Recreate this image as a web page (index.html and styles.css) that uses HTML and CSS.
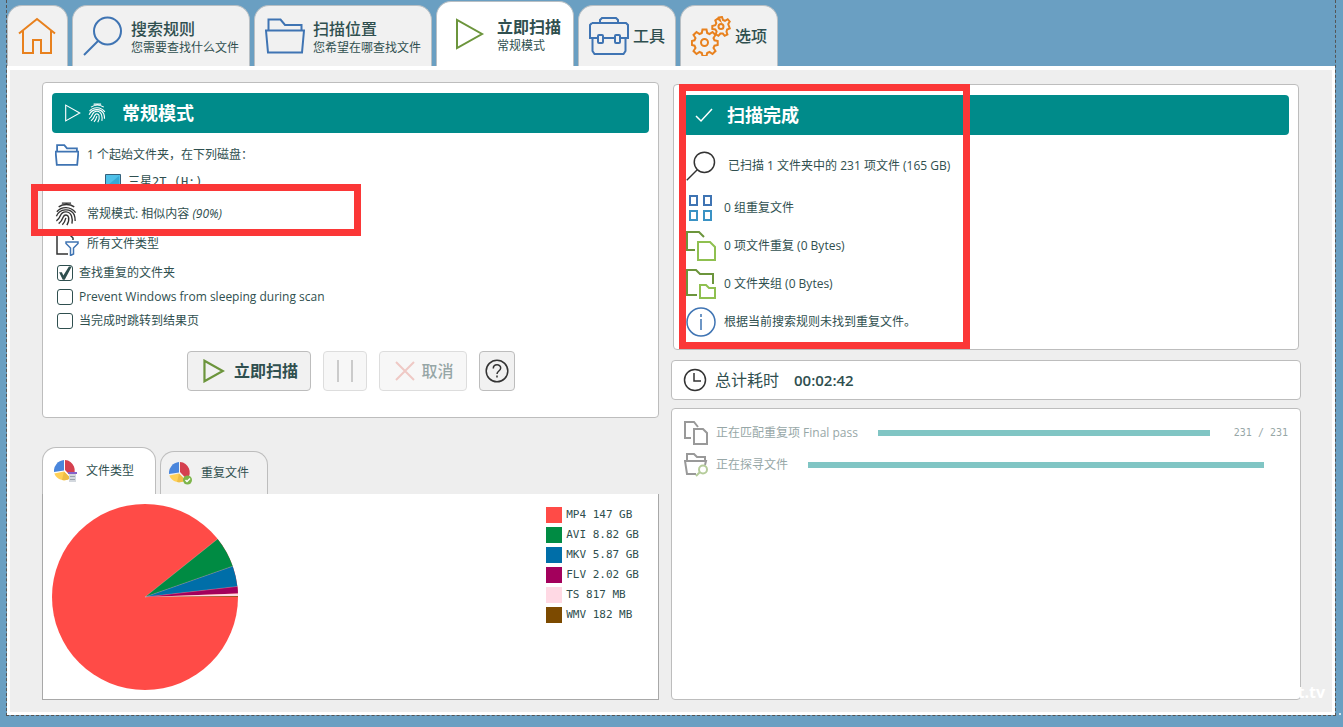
FILE: index.html
```html
<!DOCTYPE html>
<html lang="zh-CN">
<head>
<meta charset="utf-8">
<title>立即扫描</title>
<link rel="stylesheet" href="styles.css">
</head>
<body>
<svg class="defs" aria-hidden="true">
  <symbol id="i-folder" viewBox="0 0 40 36"><path d="M3.500 12.500V1.500h12l4.500 5.500h16.500v5.500M1 12.500h38l-2 22H3z"/></symbol>
  <symbol id="i-play" viewBox="0 0 30 32"><path d="M2 2v28l25-14z"/></symbol>
  <symbol id="i-lens" viewBox="0 0 40 40"><circle cx="24.500" cy="15" r="13.500"/><path d="M15 25 1 39"/></symbol>
  <symbol id="i-print" viewBox="0 0 24 26"><path d="M7.500 1.200h10M4 5.200c5-3.400 12-3.400 17 0M2 10.500C7 4.500 17 4.200 22.500 11.500M1.500 15.500C5 7 17 6 21 14c1 2.400 1 4.500 1 6.500M1.500 20.500c2.500-1.500 3.500-3.500 4.300-5.500 2.500-6.300 10.400-5.400 12.300.5 1 3 .8 5.500.4 8M4 23.500c3-2 4-4.500 5-7.200 1.300-3.300 5-2.600 5.800.2.800 3.200-.3 6-1.800 8.700M8 24.800c2.200-2.300 3.200-4.800 3.900-7.600"/></symbol>
  <symbol id="i-pie" viewBox="0 0 24 24"><path fill="#4a86dc" d="M10 11.500 0 13A11 11 0 0 1 10 1z"/><path fill="#d5404f" d="M11 1a10.500 10.500 0 0 1 7 17.500L11 11z"/><path fill="#ffd056" d="M10 12.500 16.500 19A10.500 10.500 0 0 1 .3 14.500z"/><path fill="#eebd46" d="m10 12.500 6.500 6.500a10 10 0 0 1-8.500 2z"/></symbol>
</svg>
<div class="frame">
  <nav class="tabs" role="tablist" aria-label="主导航">
    <button class="tab tab-home" role="tab" aria-label="主页">
      <svg class="orange" width="38" height="38" viewBox="0 0 38 38"><path d="M1 16.500 19 2l18 14.500M5 14v22h10V23h8v13h10V14"/></svg>
    </button>
    <button class="tab tab-wide" role="tab">
      <svg class="blue" width="40" height="40"><use href="#i-lens"/></svg>
      <span class="tab-text"><span class="tab-title">搜索规则</span><span class="tab-sub">您需要查找什么文件</span></span>
    </button>
    <button class="tab tab-wide" role="tab">
      <svg class="blue" width="40" height="36"><use href="#i-folder"/></svg>
      <span class="tab-text"><span class="tab-title">扫描位置</span><span class="tab-sub">您希望在哪查找文件</span></span>
    </button>
    <button class="tab tab-active" role="tab" aria-selected="true">
      <svg class="green" width="30" height="32"><use href="#i-play"/></svg>
      <span class="tab-text"><span class="tab-title strong">立即扫描</span><span class="tab-sub">常规模式</span></span>
    </button>
    <button class="tab tab-small" role="tab">
      <svg class="blue" width="40" height="38" viewBox="0 0 40 38"><path d="M11 6V3l2-2h14l2 2v3M3 6h34l2 2v13H31M9 21H1V8l2-2M15 21h10M3.500 21v13l2 3h29l2-3V21"/><rect x="9" y="18" width="5" height="8" rx="1"/><rect x="26" y="18" width="5" height="8" rx="1"/></svg>
      <span class="tab-title">工具</span>
    </button>
    <button class="tab tab-small" role="tab">
      <svg class="orange" width="40" height="40" viewBox="0 0 40 40"><circle cx="13.500" cy="26.500" r="3.500"/><path d="M11.500 13.500h4l.7 3.500 2.300 1 3-2 3 3-2 3 1 2.300 3.200.7v4l-3.200.7-1 2.300 2 3-3 3-3-2-2.300 1-.7 3h-4l-.7-3-2.300-1-3 2-3-3 2-3-1-2.300-2.600-.7v-4l2.600-.7 1-2.300-2-3 3-3 3 2 2.300-1z"/><circle cx="30" cy="10.500" r="2.500"/><path d="m28 1.500 3-.5 1 3 2 .8 2.700-1.600 2 2.300-1.500 2.500.7 2 .9 2.500-2.700 1-.6 2.300.9 2.700-2.700 1.300-1.900-2.300h-2.400l-2 2.300-2.600-1.500.8-2.800-1.300-2-3-.5v-3l3-.8 1-2-1-2.800 2.500-1.800 2.200 1.800z"/></svg>
      <span class="tab-title">选项</span>
    </button>
  </nav>

  <main class="panel">
    <div class="col">
      <section class="card setup">
        <h2 class="banner">
          <svg class="line" width="18" height="18"><use href="#i-play"/></svg>
          <svg class="line thin" width="18" height="20"><use href="#i-print"/></svg>
          <span class="banner-left">常规模式</span>
        </h2>
        <div class="row row-folder"><svg class="blue bold" width="24" height="22"><use href="#i-folder"/></svg><span>1 个起始文件夹，在下列磁盘：</span></div>
        <div class="row row-disk"><svg width="16" height="16" viewBox="0 0 16 16"><path fill="#4fc0e8" stroke="#35607a" d="M.5 .5h15v11H.5z"/><path fill="#36a9d6" d="M14 2v9H3z"/><path fill="#35607a" d="M4 14h8v1H4z"/></svg><span class="mono">三星2T (H:)</span></div>
        <div class="row row-mode"><svg class="dark thin" width="22" height="26"><use href="#i-print"/></svg><span>常规模式: 相似内容 <i>(90%)</i></span></div>
        <div class="row row-types"><svg width="24" height="24" viewBox="0 0 24 24"><path class="dark thin" d="M13 22H2V1h11l5 5v2"/><path class="blue thin" d="M11 10h12v1.500L18.500 16v6l-3 1.500V16L11 11.500z"/></svg><span>所有文件类型</span></div>
        <label class="check"><input type="checkbox" checked><span>查找重复的文件夹</span></label>
        <label class="check"><input type="checkbox"><span>Prevent Windows from sleeping during scan</span></label>
        <label class="check"><input type="checkbox"><span>当完成时跳转到结果页</span></label>
        <div class="actions">
          <button class="btn btn-scan"><svg class="green bold" width="22" height="24"><use href="#i-play"/></svg><span class="strong">立即扫描</span></button>
          <button class="btn btn-pause" disabled aria-label="暂停"><svg class="gray" width="18" height="24" viewBox="0 0 18 24"><path d="M2 1v22M16 1v22"/></svg></button>
          <button class="btn btn-cancel" disabled><svg class="rose" width="20" height="20" viewBox="0 0 20 20"><path d="m1 1 18 18M19 1 1 19"/></svg><span>取消</span></button>
          <button class="btn btn-help" aria-label="帮助"><svg class="dark thin" width="24" height="24" viewBox="0 0 24 24"><circle cx="12" cy="12" r="10.800"/><path d="M8.300 9.500c0-5 7.400-4.700 7.400-.5 0 3-3.700 3-3.700 6M12 16.500v2"/></svg></button>
        </div>
        <div class="mark mark-mode"></div>
      </section>

      <section class="chart">
        <div class="chart-tabs" role="tablist" aria-label="图表">
          <button class="ctab ctab-active" role="tab" aria-selected="true"><svg width="24" height="24" viewBox="0 0 24 24"><use href="#i-pie" width="24" height="24"/><path fill="#d3d8de" d="M15 14h7v9h-7z"/><path fill="#8562c8" d="M14 13h9v2h-9z"/><path stroke="#9aa3ad" d="M16 17.500h5M16 20.500h5"/></svg>文件类型</button>
          <button class="ctab" role="tab"><svg width="24" height="24" viewBox="0 0 24 24"><use href="#i-pie" width="24" height="24"/><circle cx="18.500" cy="19" r="4.500" fill="#7db54a"/><path d="m16.500 19 1.500 1.500 3-3" fill="none" stroke="#fff" stroke-width="1.500"/></svg>重复文件</button>
        </div>
        <div class="chart-body">
          <svg class="pie" width="186" height="186" viewBox="0 0 186 186" role="img" aria-label="文件类型">
            <circle cx="93" cy="93" r="93" fill="#ff4b47"/>
            <path fill="#008b43" d="M93 93 165.630 34.920A93 93 0 0 1 180.740 62.160z"/>
            <path fill="#006ea8" d="M93 93 180.740 62.160A93 93 0 0 1 185.390 82.410z"/>
            <path fill="#a3005c" d="M93 93 185.390 82.410A93 93 0 0 1 185.940 89.540z"/>
            <path fill="#ffd9e4" d="M93 93 185.940 89.540A93 93 0 0 1 186 92.370z"/>
            <path fill="#7c4a00" d="M93 93 186 92.370V93z"/>
            <path fill="none" stroke="#fff" stroke-opacity=".35" stroke-width=".6" d="M93 93 165.630 34.920M93 93 180.740 62.160M93 93 185.390 82.410"/>
          </svg>
          <ul class="legend">
            <li><i class="sw mp4"></i>MP4 147 GB</li>
            <li><i class="sw avi"></i>AVI 8.82 GB</li>
            <li><i class="sw mkv"></i>MKV 5.87 GB</li>
            <li><i class="sw flv"></i>FLV 2.02 GB</li>
            <li><i class="sw ts"></i>TS 817 MB</li>
            <li><i class="sw wmv"></i>WMV 182 MB</li>
          </ul>
        </div>
      </section>
    </div>

    <div class="col">
      <section class="card result">
        <h2 class="banner">
          <svg class="line thin" width="18" height="18" viewBox="0 0 18 18"><path d="m1 10 5 5L17 3"/></svg>
          <span class="banner-right">扫描完成</span>
        </h2>
        <div class="item item-first"><svg class="dark" width="30" height="30"><use href="#i-lens"/></svg><span>已扫描 1 文件夹中的 231 项文件 (165 GB)</span></div>
        <div class="item"><svg width="30" height="30" viewBox="0 0 30 30"><path class="blue" d="M4 3h7v9H4zM18 3h7v9h-7z"/><path class="sky" d="M4 18h7v9H4zM18 18h7v9h-7z"/></svg><span>0 组重复文件</span></div>
        <div class="item"><svg width="30" height="30" viewBox="0 0 30 30"><path class="green" d="M9 19H1V1h12l5 5"/><path class="lime" d="M12 11h12l5 5v13H12z"/></svg><span>0 项文件重复 (0 Bytes)</span></div>
        <div class="item"><svg width="30" height="30" viewBox="0 0 30 30"><path class="green" d="M11 26H1V1h9l4 4h13v10"/><path class="lime" d="M14 16h6l3 3h6v10H14z"/></svg><span>0 文件夹组 (0 Bytes)</span></div>
        <div class="item"><svg class="blue thin" width="30" height="30" viewBox="0 0 30 30"><circle cx="15" cy="15" r="14"/><path d="M15 12v11M15 7v3"/></svg><span>根据当前搜索规则未找到重复文件。</span></div>
        <div class="mark mark-result"></div>
      </section>

      <section class="card timer">
        <svg class="dark thin" width="24" height="24" viewBox="0 0 24 24"><circle cx="12" cy="12" r="10.500"/><path d="M11 5v8h7"/></svg>
        <span>总计耗时</span><strong>00:02:42</strong>
      </section>

      <section class="card jobs">
        <div class="job">
          <svg class="gray" width="24" height="24" viewBox="0 0 24 24"><path d="M7 17H1V1h9l4 5M10 8h9l4 4v11H10z"/></svg>
          <label for="p1">正在匹配重复项 Final pass</label>
          <progress id="p1" max="231" value="231"></progress>
          <span class="count">231 / 231</span>
        </div>
        <div class="job">
          <svg width="24" height="24" viewBox="0 0 24 24"><path class="gray" d="M3 8V1h7l3 3h8v4M12 21H3L1 8h21l-1 4"/><g class="sage"><circle cx="19" cy="16.500" r="4"/><path d="m16 19-4 4"/></g></svg>
          <label for="p2">正在探寻文件</label>
          <progress id="p2" max="100" value="100"></progress>
          <span class="count"></span>
        </div>
      </section>
    </div>
  </main>
  <div class="watermark">t.tv</div>
  <svg class="grip" width="10" height="11" viewBox="0 0 10 11" aria-hidden="true"><path fill="#d5e4ee" d="M7 0h2v2H7zM4 3h2v2H4zM7 3h2v2H7zM1 6h2v2H1zM4 6h2v2H4zM7 6h2v2H7z"/></svg>
</div>
</body>
</html>
```
FILE: styles.css
```css
* { box-sizing: border-box; }

body {
  margin: 0;
  background: #6a9fc2;
  color: #2f4f4f;
  font: 12px/18px "Open Sans", "Noto Sans CJK SC", sans-serif;
}

button { font: inherit; color: inherit; cursor: pointer; }
h2, ul { margin: 0; padding: 0; }
svg { flex: none; }
.defs { position: absolute; width: 0; height: 0; }
.strong { font-weight: 700; }
.mono { font-family: "DejaVu Sans Mono", "Noto Sans CJK SC", monospace; }

.orange, .blue, .green, .line, .dark, .gray, .rose, .sky, .lime, .sage {
  fill: none;
  stroke-width: 2;
}
.orange { stroke: #e8811e; }
.blue { stroke: #3f74b3; }
.green { stroke: #6c953c; }
.line { stroke: #fff; }
.dark { stroke: #333; }
.gray { stroke: #999; }
.rose { stroke: #e0948c; }
.sky { stroke: #3a92c4; }
.lime { stroke: #8fc050; }
.sage { stroke: #b5cc9a; }
.thin { stroke-width: 1.5; }
.bold { stroke-width: 3; }

.frame {
  position: relative;
  display: flex;
  flex-direction: column;
  min-height: calc(100vh - 11px);
  margin: 0 7px 0 6px;
  border: 1px dashed #555;
  border-top: 0;
}

.tabs {
  display: flex;
  align-items: flex-end;
  gap: 4px;
  height: 66px;
}
.tab {
  display: flex;
  align-items: center;
  height: 61px;
  padding: 0 0 0 10px;
  gap: 8px;
  border: 1px solid #b8bfc4;
  border-bottom: 0;
  border-radius: 15px 15px 0 0;
  background: #f1f1f1;
  text-align: left;
}
.tab-home { width: 61px; }
.tab-wide { width: 178px; }
.tab-small { width: 98px; gap: 4px; }
.tab-active { width: 138px; height: 65px; padding-left: 18px; gap: 12px; background: #fff; }
.tab-text { display: flex; flex-direction: column; padding-top: 4px; }
.tab-title { font-size: 16px; line-height: 20px; font-weight: 500; }
.tab-title.strong { font-weight: 700; }
.tab-sub { line-height: 18px; }

.panel {
  flex: 1;
  display: grid;
  grid-template-columns: minmax(0, 617fr) minmax(0, 630fr);
  gap: 12px;
  padding: 12px 31px 12px 32px;
  border: 3px solid #fff;
  border-top-width: 4px;
  background: #eee;
}
.col { display: flex; flex-direction: column; }
.card {
  position: relative;
  border: 1px solid #bdbdbd;
  border-radius: 4px;
  background: #fff;
}

.banner {
  display: flex;
  align-items: center;
  height: 40px;
  padding-left: 12px;
  gap: 6px;
  border-radius: 4px;
  background: #008b8a;
  color: #fff;
  font-size: 18px;
  line-height: 24px;
  font-weight: 700;
}
.banner-left { margin-left: 10px; }
.banner-right { margin-left: 8px; }

.setup { padding: 10px 9px 26px; }
.row { display: flex; align-items: center; gap: 8px; padding-left: 3px; height: 30px; }
.row-folder { height: 28px; margin-top: 8px; }
.row-disk { height: 26px; padding-left: 53px; gap: 7px; }
.row-mode { margin-top: 4px; gap: 10px; }
.check { display: flex; align-items: center; gap: 6px; height: 24px; padding-left: 5px; }
.row-types { margin-bottom: 2px; }
.check input {
  appearance: none;
  width: 16px;
  height: 16px;
  margin: 0;
  border: 1px solid #2f4f4f;
  border-radius: 3px;
  background: #fff;
}
.check input:checked::before {
  content: "";
  display: block;
  width: 14px;
  height: 14px;
  background: #2f4f4f;
  clip-path: polygon(8% 45%, 28% 45%, 38% 68%, 78% 4%, 98% 4%, 48% 98%, 34% 98%);
}

.actions { display: flex; justify-content: center; gap: 12px; margin-top: 18px; }
.btn {
  display: flex;
  align-items: center;
  justify-content: center;
  gap: 9px;
  height: 40px;
  padding: 0;
  border: 1px solid #bdbdbd;
  border-radius: 4px;
  background: #f1f1f1;
  font-size: 16px;
  line-height: 24px;
}
.btn:disabled { opacity: .5; cursor: default; }
.btn-scan { width: 124px; padding-left: 4px; }
.btn-pause { width: 44px; }
.btn-cancel { width: 88px; gap: 6px; padding-left: 4px; font-weight: 500; }
.btn-help { width: 36px; }

.mark { position: absolute; border: 7px solid #fb3737; pointer-events: none; }
.mark-mode { left: -12px; top: 101px; width: 330px; height: 52px; }
.mark-result { left: 5px; top: -1px; width: 291px; height: 265px; }

.chart { flex: 1; display: flex; flex-direction: column; margin-top: 29px; }
.chart-tabs { display: flex; align-items: flex-end; gap: 4px; height: 47px; }
.ctab {
  display: flex;
  align-items: center;
  gap: 8px;
  width: 108px;
  height: 43px;
  padding: 0 0 0 8px;
  border: 1px solid #bdbdbd;
  border-bottom: 0;
  border-radius: 14px 14px 0 0;
  background: #f1f1f1;
}
.ctab-active { width: 114px; height: 47px; padding-left: 11px; background: #fff; }
.chart-body {
  flex: 1;
  display: flex;
  justify-content: space-between;
  padding: 10px 19px 9px 9px;
  border: 1px solid #a8a8a8;
  border-top: 0;
  background: #fff;
}
.legend {
  list-style: none;
  padding-top: 1px;
  font: 11px/20px "DejaVu Sans Mono", monospace;
}
.legend li { display: flex; align-items: center; gap: 4px; height: 20px; }
.sw { width: 16px; height: 16px; }
.mp4 { background: #ff4b47; }
.avi { background: #008b43; }
.mkv { background: #006ea8; }
.flv { background: #a3005c; }
.ts { background: #ffd9e4; }
.wmv { background: #7c4a00; }

.result { margin: 2px 2px 0; padding: 10px 9px 8px; }
.item { display: flex; align-items: center; gap: 8px; height: 38px; padding-left: 3px; }
.item-first { margin-top: 8px; height: 46px; gap: 12px; }

.timer {
  display: flex;
  align-items: center;
  gap: 8px;
  height: 40px;
  margin-top: 10px;
  padding-left: 11px;
  font-size: 16px;
  line-height: 24px;
}
.timer strong { margin-left: 7px; font-size: 15px; font-weight: 600; }

.jobs { flex: 1; margin-top: 8px; padding: 8px 12px; }
.job { display: flex; align-items: center; height: 32px; color: #97a7a7; }
.job label { margin: 0 20px 0 8px; }
.job progress {
  appearance: none;
  flex: 1;
  width: 0;
  height: 6px;
  border: 0;
  background: #d9eeee;
}
.job progress::-webkit-progress-bar { background: #d9eeee; }
.job progress::-webkit-progress-value { background: #80c5c4; }
.count { margin-left: 24px; font: 10px/18px "DejaVu Sans Mono", monospace; }

.watermark {
  position: absolute;
  right: 10px;
  bottom: 12px;
  color: #fff;
  font-size: 16px;
  line-height: 22px;
  font-weight: 700;
}
.grip { position: absolute; right: -7px; bottom: -9px; }
```
